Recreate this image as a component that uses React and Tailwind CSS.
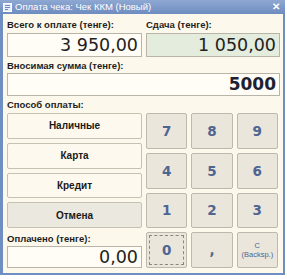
import React from 'react';

const font = { fontFamily: '"Liberation Sans", Arial, sans-serif' };

const Label = ({ children, className = '' }) => (
  <div className={`text-[9.5px] font-bold leading-none text-[#1e1e1e] ${className}`}>{children}</div>
);

const Field = ({ children, className = '', bold = false }) => (
  <div
    className={`flex items-center justify-end pr-[3px] border border-[#b8b5a8] ${bold ? 'font-bold text-[#1c2233]' : 'text-[#222]'} ${className}`}
    style={{ fontFamily: '"DejaVu Sans", Verdana, sans-serif' }}
  >
    {children}
  </div>
);

const PayButton = ({ children, muted = false }) => (
  <div
    className={`flex-1 flex items-center justify-center border border-[#c6c2b3] rounded-[2px] text-[10px] font-bold text-[#1a1a1a] ${
      muted ? 'bg-[#ebe9df]' : 'bg-[#fdf9ee]'
    }`}
  >
    {children}
  </div>
);

const Key = ({ children, focus = false, small = false }) => (
  <div className="relative flex items-center justify-center border border-[#bdb9ad] rounded-[2px] bg-[#ebe6dc] text-[#4f6591] font-bold">
    {focus && <span className="absolute inset-[2px] border border-dashed border-[#8a877e]" />}
    {small ? (
      <span className="text-[7.5px] leading-[9px] text-center font-normal">C<br />(Backsp.)</span>
    ) : (
      <span className="text-[13.5px]" style={{ fontFamily: '"DejaVu Sans", Verdana, sans-serif' }}>{children}</span>
    )}
  </div>
);

export default function App() {
  return (
    <div className="w-[287px] h-[279px] bg-white" style={font}>
      <div className="w-[285px] h-[275px] flex flex-col bg-[#6f8fc3] pl-[3px] pr-[2px] pb-[2px]">
        {/* title bar */}
        <div className="h-[14px] shrink-0 flex items-center bg-gradient-to-b from-[#8ea8d2] to-[#6e8cc0] -ml-[3px] -mr-[2px] pl-[3px] pr-[5px]">
          <svg width="9" height="9" viewBox="0 0 9 9" className="shrink-0">
            <rect x="0.5" y="0.5" width="8" height="8" fill="#e8eef8" stroke="#ffffff" />
            <rect x="2" y="2" width="5" height="1" fill="#6e8cc0" />
            <rect x="2" y="4" width="5" height="1" fill="#6e8cc0" />
            <rect x="2" y="6" width="3" height="1" fill="#6e8cc0" />
          </svg>
          <span className="ml-[3px] text-[9.5px] text-white leading-none">Оплата чека: Чек ККМ (Новый)</span>
          <span className="ml-auto text-[10px] font-bold text-white leading-none">✕</span>
        </div>

        <div className="flex-1 bg-[#fcf8ec] pl-[4px] pr-[3px] pt-[5px] flex flex-col">
          <div className="flex gap-[4px]">
            <div className="w-[135px] flex flex-col">
              <Label className="h-[14px] pt-[1px]">Всего к оплате (тенге):</Label>
              <Field className="h-[24px] bg-[#fffdf6] text-[17.5px]">3 950,00</Field>
            </div>
            <div className="flex-1 flex flex-col">
              <Label className="h-[14px] pt-[1px]">Сдача (тенге):</Label>
              <Field className="h-[24px] bg-[#e4eddd] text-[17.5px]">1 050,00</Field>
            </div>
          </div>

          <Label className="h-[16px] pt-[4px]">Вносимая сумма (тенге):</Label>
          <Field bold className="h-[23px] bg-[#fffdf6] text-[17px]">5000</Field>

          <Label className="h-[16px] pt-[4px]">Способ оплаты:</Label>

          <div className="flex gap-[4px] mt-[1px]">
            <div className="w-[135px] flex flex-col">
              <div className="h-[115px] flex flex-col gap-[4px]">
                <PayButton>Наличные</PayButton>
                <PayButton>Карта</PayButton>
                <PayButton>Кредит</PayButton>
                <PayButton muted>Отмена</PayButton>
              </div>
              <Label className="h-[18px] pt-[6px]">Оплачено (тенге):</Label>
              <Field className="h-[22px] bg-[#fffdf6] text-[17.5px]">0,00</Field>
            </div>
            <div className="w-[132px] h-[155px] grid grid-cols-3 grid-rows-4 gap-[4px]">
              <Key>7</Key>
              <Key>8</Key>
              <Key>9</Key>
              <Key>4</Key>
              <Key>5</Key>
              <Key>6</Key>
              <Key>1</Key>
              <Key>2</Key>
              <Key>3</Key>
              <Key focus>0</Key>
              <Key>,</Key>
              <Key small />
            </div>
          </div>
        </div>
      </div>
    </div>
  );
}
